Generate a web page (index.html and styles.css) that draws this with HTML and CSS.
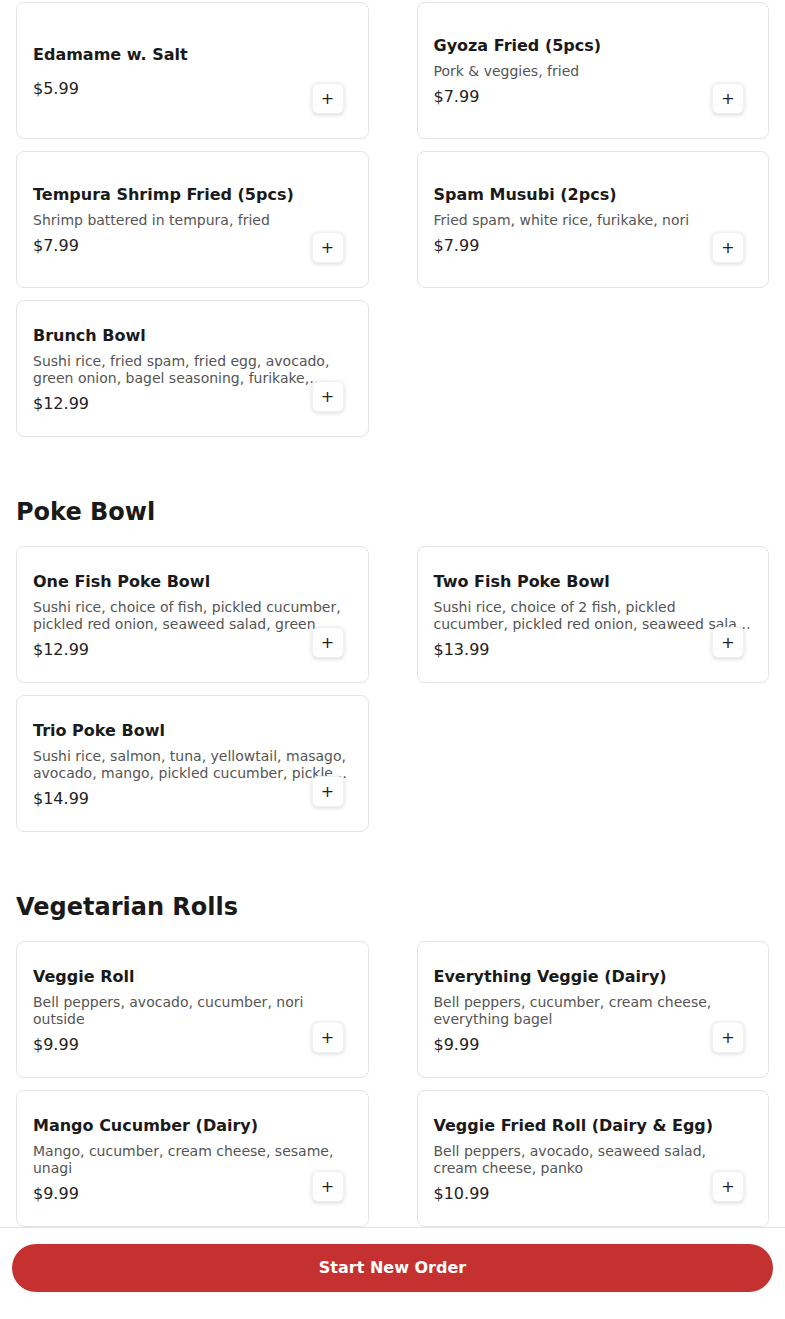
FILE: index.html
```html
<!DOCTYPE html>
<html lang="en">
<head>
<meta charset="utf-8">
<title>Menu</title>
<link rel="stylesheet" href="styles.css">
</head>
<body>
<main class="menu">
  <section class="category">
    <div class="grid">
      <article class="item">
        <h3 class="item-name">Edamame w. Salt</h3>
        <p class="item-desc"></p>
        <p class="item-price">$5.99</p>
        <button class="add-btn" aria-label="Add">+</button>
      </article>
      <article class="item">
        <h3 class="item-name">Gyoza Fried (5pcs)</h3>
        <p class="item-desc">Pork &amp; veggies, fried</p>
        <p class="item-price">$7.99</p>
        <button class="add-btn" aria-label="Add">+</button>
      </article>
      <article class="item">
        <h3 class="item-name">Tempura Shrimp Fried (5pcs)</h3>
        <p class="item-desc">Shrimp battered in tempura, fried</p>
        <p class="item-price">$7.99</p>
        <button class="add-btn" aria-label="Add">+</button>
      </article>
      <article class="item">
        <h3 class="item-name">Spam Musubi (2pcs)</h3>
        <p class="item-desc">Fried spam, white rice, furikake, nori</p>
        <p class="item-price">$7.99</p>
        <button class="add-btn" aria-label="Add">+</button>
      </article>
      <article class="item">
        <h3 class="item-name">Brunch Bowl</h3>
        <p class="item-desc">Sushi rice, fried spam, fried egg, avocado, green onion, bagel seasoning, furikake, sesame, nori</p>
        <p class="item-price">$12.99</p>
        <button class="add-btn" aria-label="Add">+</button>
      </article>
    </div>
  </section>

  <section class="category">
    <h2 class="category-title">Poke Bowl</h2>
    <div class="grid">
      <article class="item">
        <h3 class="item-name">One Fish Poke Bowl</h3>
        <p class="item-desc">Sushi rice, choice of fish, pickled cucumber, pickled red onion, seaweed salad, green onion, masago, sesame</p>
        <p class="item-price">$12.99</p>
        <button class="add-btn" aria-label="Add">+</button>
      </article>
      <article class="item">
        <h3 class="item-name">Two Fish Poke Bowl</h3>
        <p class="item-desc">Sushi rice, choice of 2 fish, pickled cucumber, pickled red onion, seaweed salad, green onion, masago</p>
        <p class="item-price">$13.99</p>
        <button class="add-btn" aria-label="Add">+</button>
      </article>
      <article class="item">
        <h3 class="item-name">Trio Poke Bowl</h3>
        <p class="item-desc">Sushi rice, salmon, tuna, yellowtail, masago, avocado, mango, pickled cucumber, pickled red onion</p>
        <p class="item-price">$14.99</p>
        <button class="add-btn" aria-label="Add">+</button>
      </article>
    </div>
  </section>

  <section class="category">
    <h2 class="category-title">Vegetarian Rolls</h2>
    <div class="grid">
      <article class="item">
        <h3 class="item-name">Veggie Roll</h3>
        <p class="item-desc">Bell peppers, avocado, cucumber, nori outside</p>
        <p class="item-price">$9.99</p>
        <button class="add-btn" aria-label="Add">+</button>
      </article>
      <article class="item">
        <h3 class="item-name">Everything Veggie (Dairy)</h3>
        <p class="item-desc">Bell peppers, cucumber, cream cheese, everything bagel</p>
        <p class="item-price">$9.99</p>
        <button class="add-btn" aria-label="Add">+</button>
      </article>
      <article class="item">
        <h3 class="item-name">Mango Cucumber (Dairy)</h3>
        <p class="item-desc">Mango, cucumber, cream cheese, sesame, unagi</p>
        <p class="item-price">$9.99</p>
        <button class="add-btn" aria-label="Add">+</button>
      </article>
      <article class="item">
        <h3 class="item-name">Veggie Fried Roll (Dairy &amp; Egg)</h3>
        <p class="item-desc">Bell peppers, avocado, seaweed salad, cream cheese, panko</p>
        <p class="item-price">$10.99</p>
        <button class="add-btn" aria-label="Add">+</button>
      </article>
    </div>
  </section>
</main>

<footer class="order-bar">
  <button class="order-btn">Start New Order</button>
</footer>
</body>
</html>
```

FILE: styles.css
```css
* {
  box-sizing: border-box;
}

html, body {
  margin: 0;
  padding: 0;
  background: #ffffff;
}

body {
  font-family: "DejaVu Sans", sans-serif;
  color: #1a1a1a;
  overflow: hidden;
}

.menu {
  padding: 2px 16px 140px;
}

.category-title {
  margin: 61px 0 19px;
  font-size: 24px;
  line-height: 29px;
  font-weight: 700;
  color: #1a1a1a;
}

.grid {
  display: grid;
  grid-template-columns: 1fr 1fr;
  column-gap: 48px;
  row-gap: 12px;
}

.item {
  position: relative;
  display: flex;
  flex-direction: column;
  justify-content: center;
  min-height: 137px;
  padding: 18px 16px 16px;
  background: #fff;
  border: 1px solid #e3e3e3;
  border-radius: 8px;
}

.item-name {
  margin: 0 0 7px;
  font-size: 16px;
  line-height: 20px;
  font-weight: 700;
  color: #1a1a1a;
}

.item-desc {
  margin: 0 0 7px;
  font-size: 14px;
  line-height: 17px;
  color: #555;
  display: -webkit-box;
  -webkit-box-orient: vertical;
  -webkit-line-clamp: 2;
  overflow: hidden;
}

.item-price {
  margin: 0;
  font-size: 16px;
  line-height: 20px;
  color: #222;
}

.add-btn {
  position: absolute;
  right: 24px;
  bottom: 24px;
  width: 32px;
  height: 31px;
  padding: 0;
  border: 1px solid #f0f0f0;
  border-radius: 6px;
  background: #fff;
  box-shadow: 0 1px 4px rgba(0, 0, 0, 0.16);
  font-family: "DejaVu Sans", sans-serif;
  font-size: 16px;
  line-height: 29px;
  color: #222;
  cursor: pointer;
}

.order-bar {
  position: fixed;
  left: 0;
  right: 0;
  bottom: 0;
  height: 92px;
  padding: 16px 12px 27px;
  background: #fff;
  border-top: 1px solid #e3e3e3;
}

.order-btn {
  display: block;
  width: 100%;
  height: 48px;
  border: none;
  border-radius: 24px;
  background: #c53030;
  color: #fff;
  font-family: "DejaVu Sans", sans-serif;
  font-size: 16px;
  font-weight: 700;
  line-height: 46px;
  cursor: pointer;
}
```
